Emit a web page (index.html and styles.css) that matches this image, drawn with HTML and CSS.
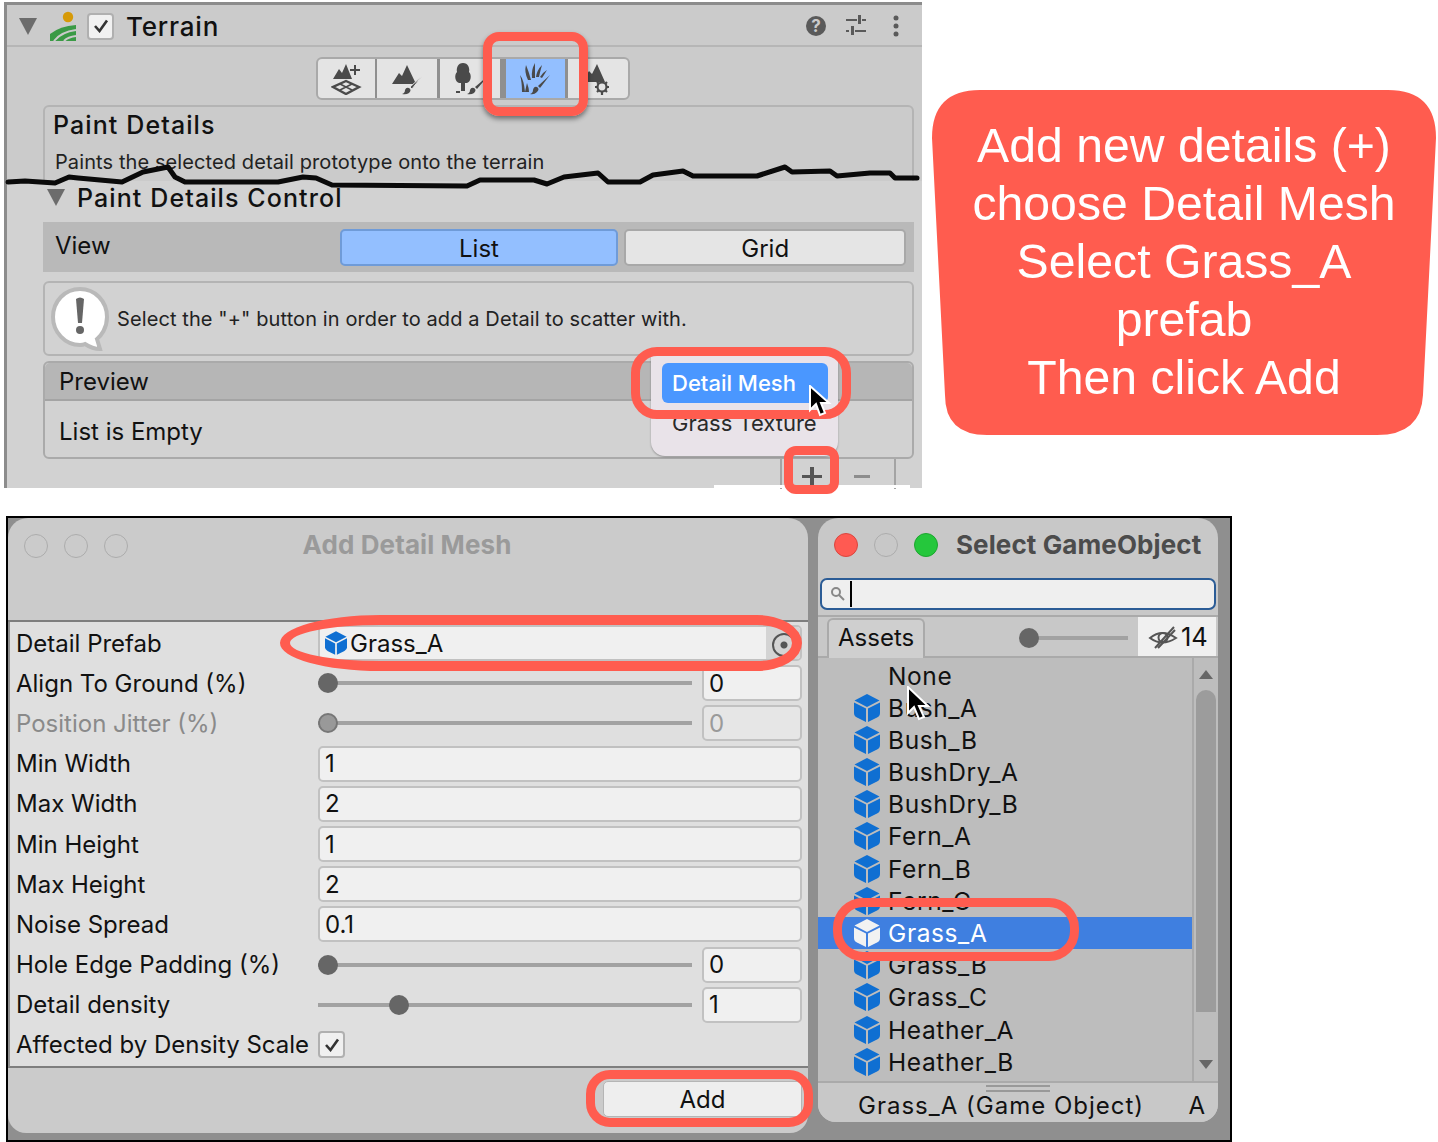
FILE: index.html
```html
<!DOCTYPE html>
<html lang="en">
<head>
  <meta charset="UTF-8" />
  <title>Terrain details</title>
  <link rel="stylesheet" href="styles.css">
</head>
<body>
<svg width="0" height="0" class="defs">
  <symbol id="cube" viewBox="0 0 26 28">
    <path d="M13 0 25.5 6.5 13 13 .5 6.5Z"/>
    <path d="M0 8.5 12 14.5V28L3 23.5Q0 22 0 19Z"/>
    <path d="M26 8.5 14 14.5V28L23 23.5Q26 22 26 19Z"/>
  </symbol>
</svg>

<section class="panel">
  <header class="comp-head">
    <span class="foldout"></span>
    <svg class="terrain-ico" width="26" height="34" viewBox="0 0 26 34">
      <circle cx="18" cy="10" r="5.2" fill="#d69a08"/>
      <path d="M0 34V27Q10 19 26 18V34Z" fill="#3a9a45"/>
      <path d="M4 34Q11 25 26 23M14 34Q18 30 26 29" fill="none" stroke="#cbcbcb" stroke-width="2"/>
    </svg>
    <span class="check"><svg width="16" height="14" viewBox="0 0 16 14"><path d="M2 7 6.5 12 14 1.5" fill="none" stroke="#333" stroke-width="2.6"/></svg></span>
    <b class="comp-title">Terrain</b>
    <span class="head-tools">
      <svg width="22" height="22" viewBox="0 0 22 22"><circle cx="11" cy="11" r="10" fill="#5a5a5a"/><text x="11" y="16.500" text-anchor="middle" class="q">?</text></svg>
      <svg class="sliders" width="22" height="22" viewBox="0 0 22 22" fill="#5a5a5a"><path d="M1 4H12V6H1ZM17 4H21V6H17ZM1 15H4V17H1ZM10 15H21V17H10Z"/><path d="M13 0H16V9H13ZM6 11H9V20H6Z"/></svg>
      <svg class="dots" width="8" height="22" viewBox="0 0 8 22" fill="#5a5a5a"><circle cx="4" cy="3" r="2.5"/><circle cx="4" cy="11" r="2.5"/><circle cx="4" cy="19" r="2.5"/></svg>
    </span>
  </header>

  <div class="toolbar">
    <span class="tool">
      <svg width="32" height="32" viewBox="0 0 32 32" fill="#4a4a4a"><path d="M2 16 8 6 11 10 15 1 21 16Z"/><path d="M23 2H25V6H29V8H25V12H23V8H19V6H23Z"/><path d="M15 18 28 24 15 31 2 24Z" fill="none" stroke="#4a4a4a" stroke-width="2.4"/><path d="M9 21 21 27M21 21 9 27" stroke="#4a4a4a" stroke-width="1.600"/></svg>
    </span>
    <span class="tool">
      <svg width="32" height="32" viewBox="0 0 32 32" fill="#4a4a4a"><path d="M1 21 8 10 11 13 16 2 25 21Z"/><path d="M31 13 21 26 19 24Z" stroke="#e4e4e4"/><path d="M18 25Q21 27 18 30 15 32 11 31 14 30 14 27 15 24 18 25Z"/></svg>
    </span>
    <span class="tool">
      <svg width="36" height="34" viewBox="0 0 36 34" fill="#4a4a4a"><path d="M11 1C16 1 18 6 17 10 20 13 19 20 15 21H7C3 20 2 13 5 10 4 6 6 1 11 1Z"/><path d="M9 21H13V29H9ZM4 29H8V31H4Z"/><path d="M36 14 25 27 23 25Z"/><path d="M22 26Q25 28 22 31 19 33 15 32 18 31 18 28 19 25 22 26Z"/></svg>
    </span>
    <span class="tool on">
      <svg width="32" height="32" viewBox="0 0 32 32" fill="#4a4a4a"><path d="M9 17Q5 9 7 2 10 9 12 17Z"/><path d="M13 15Q12 7 16 0 16 8 16 15Z"/><path d="M17 14Q18 7 23 2 21 9 20 14Z"/><path d="M21 14Q23 10 28 7 25 12 23 15Z"/><path d="M1 12Q5 17 6 29H3Q3 19 1 12Z"/><path d="M8 20Q10 25 10 29H6Q7 24 8 20Z"/><path d="M31 12 21 25 19 23Z"/><path d="M18 24Q21 26 18 29 15 32 11 31 14 30 14 27 15 23 18 24Z"/></svg>
    </span>
    <span class="tool">
      <svg width="32" height="32" viewBox="0 0 32 32" fill="#4a4a4a"><path d="M0 19 7 8 10 11 15 1 23 19Z"/><circle cx="20" cy="24" r="4.500" fill="#e4e4e4" stroke="#4a4a4a" stroke-width="2.200"/><path d="M20 16V19M20 29V32M13 24H16M24 24H27M15 19 17 21M25 19 23 21M15 29 17 27M25 29 23 27" stroke="#4a4a4a" stroke-width="2.200"/></svg>
    </span>
  </div>

  <div class="info-box">
    <b class="info-title">Paint Details</b>
    <p class="info-text">Paints the selected detail prototype onto the terrain</p>
  </div>

  <div class="lower">
    <div class="control-head"><span class="foldout dark"></span><b>Paint Details Control</b></div>

    <div class="view-row">
      <span class="view-label">View</span>
      <span class="seg on">List</span>
      <span class="seg">Grid</span>
    </div>

    <div class="help-box">
      <svg width="60" height="66" viewBox="0 0 60 66">
        <path d="M30 3C45 3 57 15 57 31 57 42 51 50 47 53L50 63C44 63 38 60 35 58 33 59 31 59 30 59 15 59 3 46 3 31 3 15 15 3 30 3Z" fill="#fff" stroke="#b9b9b9" stroke-width="4"/>
        <path d="M26 13Q30 10 34 13L32 37H28Z" fill="#666"/><circle cx="30" cy="44" r="4" fill="#666"/>
      </svg>
      <span>Select the "+" button in order to add a Detail to scatter with.</span>
    </div>

    <div class="preview">
      <div class="preview-head">Preview</div>
      <div class="preview-body">List is Empty</div>
    </div>

    <div class="plus-tabs">
      <span class="tab plus"></span>
      <span class="tab minus"></span>
      <span class="tab end"></span>
    </div>
    <i class="cut"></i>
  </div>

  <div class="popup">
    <div class="popup-item on">Detail Mesh</div>
    <div class="popup-item">Grass Texture</div>
  </div>
</section>

<svg class="wobble" width="922" height="30" viewBox="0 160 922 30">
  <path d="M8 182 25 181 55 183 69 177 78 178 122 182 143 172 168 167 175 177 185 182 278 182 303 177 316 178 332 185 467 186 480 180 534 180 547 184 564 177 598 173 608 182 627 182 640 182 653 175 683 171 693 176 757 176 785 167 792 172 830 171 837 176 870 173 890 173 895 178 917 178" fill="none" stroke="#0a0a0a" stroke-width="5" stroke-linejoin="round" stroke-linecap="round"/>
</svg>

<span class="mark mark-tool"></span>
<span class="mark mark-mesh"></span>
<span class="mark mark-plus"></span>

<aside class="callout">
  <svg class="callout-bg" width="504" height="345" viewBox="0 0 504 345"><path d="M48 0H456Q504 0 504 48L491 305Q489 345 445 345H55Q13 345 13 305L0 48Q0 0 48 0Z" fill="#ff5c4f"/></svg>
  <p class="callout-text">Add new details (+)<br>choose Detail Mesh<br>Select Grass_A<br>prefab<br>Then click Add</p>
</aside>

<svg class="cursor cursor-a" width="26" height="32" viewBox="0 0 26 32"><path d="M2 1V25L8 19 12 30 17 28 13 18H21Z" fill="#000" stroke="#fff" stroke-width="2"/></svg>

<section class="desk">
  <div class="win add-win">
    <div class="title-bar">
      <span class="light"></span><span class="light"></span><span class="light"></span>
      <b class="add-title">Add Detail Mesh</b>
    </div>
    <div class="form">
      <div class="row"><label>Detail Prefab</label>
        <div class="field obj"><svg class="cube small" width="22" height="24"><use href="#cube"/></svg><span>Grass_A</span><i class="picker"></i></div></div>
      <div class="row"><label>Align To Ground (%)</label>
        <div class="slider"><i class="track"><i class="knob"></i></i><span class="field num">0</span></div></div>
      <div class="row off"><label>Position Jitter (%)</label>
        <div class="slider"><i class="track"><i class="knob"></i></i><span class="field num">0</span></div></div>
      <div class="row"><label>Min Width</label><span class="field">1</span></div>
      <div class="row"><label>Max Width</label><span class="field">2</span></div>
      <div class="row"><label>Min Height</label><span class="field">1</span></div>
      <div class="row"><label>Max Height</label><span class="field">2</span></div>
      <div class="row"><label>Noise Spread</label><span class="field">0.1</span></div>
      <div class="row"><label>Hole Edge Padding (%)</label>
        <div class="slider"><i class="track"><i class="knob"></i></i><span class="field num">0</span></div></div>
      <div class="row"><label>Detail density</label>
        <div class="slider"><i class="track mid"><i class="knob"></i></i><span class="field num">1</span></div></div>
      <div class="row"><label>Affected by Density Scale</label>
        <span class="check box"><svg width="16" height="14" viewBox="0 0 16 14"><path d="M2 7 6.5 12 14 1.5" fill="none" stroke="#333" stroke-width="2.6"/></svg></span></div>
    </div>
    <div class="win-foot"><span class="add-btn">Add</span></div>
  </div>

  <div class="win pick-win">
    <div class="pick-title">
      <span class="light red"></span><span class="light"></span><span class="light green"></span>
      <b>Select GameObject</b>
    </div>
    <div class="search">
      <svg width="16" height="16" viewBox="0 0 16 16" fill="none" stroke="#888" stroke-width="2"><circle cx="6" cy="6" r="4"/><path d="M9 9 14 14"/></svg>
      <i class="caret"></i>
    </div>
    <div class="tabs">
      <span class="assets">Assets</span>
      <i class="track zoom"><i class="knob"></i></i>
      <span class="hidden-count">
        <svg width="30" height="24" viewBox="0 0 30 24" fill="none" stroke="#555" stroke-width="2"><path d="M2 13Q14 3 28 13 14 22 2 13Z"/><circle cx="15" cy="12.500" r="4.500"/><path d="M7 23 26 2M10 23 27 5"/></svg>14
      </span>
    </div>
    <div class="list-wrap">
      <ul class="list">
        <li class="none">None</li>
        <li><svg class="cube" width="26" height="28"><use href="#cube"/></svg>Bush_A</li>
        <li><svg class="cube" width="26" height="28"><use href="#cube"/></svg>Bush_B</li>
        <li><svg class="cube" width="26" height="28"><use href="#cube"/></svg>BushDry_A</li>
        <li><svg class="cube" width="26" height="28"><use href="#cube"/></svg>BushDry_B</li>
        <li><svg class="cube" width="26" height="28"><use href="#cube"/></svg>Fern_A</li>
        <li><svg class="cube" width="26" height="28"><use href="#cube"/></svg>Fern_B</li>
        <li><svg class="cube" width="26" height="28"><use href="#cube"/></svg>Fern_C</li>
        <li class="sel"><svg class="cube" width="26" height="28"><use href="#cube"/></svg>Grass_A</li>
        <li><svg class="cube" width="26" height="28"><use href="#cube"/></svg>Grass_B</li>
        <li><svg class="cube" width="26" height="28"><use href="#cube"/></svg>Grass_C</li>
        <li class="nudge"><svg class="cube" width="26" height="28"><use href="#cube"/></svg>Heather_A</li>
        <li class="nudge"><svg class="cube" width="26" height="28"><use href="#cube"/></svg>Heather_B</li>
      </ul>
      <div class="scroll">
        <i class="arrow up"></i>
        <i class="thumb"></i>
        <i class="arrow down"></i>
      </div>
    </div>
    <div class="pick-foot"><i class="grip"></i><span>Grass_A (Game Object)</span><span class="bundle">A</span></div>
  </div>
</section>

<span class="mark mark-prefab"></span>
<span class="mark mark-grass"></span>
<span class="mark mark-add"></span>
<svg class="cursor cursor-b" width="26" height="36" viewBox="0 0 26 36"><path d="M2 1V27L8 21 13 33 18 31 13 20H22Z" fill="#000" stroke="#fff" stroke-width="2"/></svg>
</body>
</html>
```

FILE: styles.css
```css
* {
  box-sizing: border-box;
}
html, body {
  margin: 0;
  background: #fff;
}
body {
  position: relative;
  width: 1438px;
  height: 1142px;
  overflow: hidden;
  font-family: Inter, "Liberation Sans", sans-serif;
  font-size: 24px;
  color: #111;
}
.defs {
  position: absolute;
}
i {
  display: block;
}

/* top panel */
.panel {
  position: absolute;
  left: 4px;
  top: 2px;
  width: 918px;
  height: 486px;
  background: #cbcbcb;
  border-top: 3px solid #8c8c8c;
  border-left: 3px solid #8c8c8c;
}
.comp-head {
  display: flex;
  align-items: center;
  height: 42px;
  padding: 2px 22px 0 12px;
  border-bottom: 2px solid #b6b6b6;
}
.foldout {
  flex: none;
  width: 0;
  height: 0;
  border-left: 9px solid transparent;
  border-right: 9px solid transparent;
  border-top: 17px solid #6c6c6c;
}
.terrain-ico {
  margin: 0 0 4px 13px;
}
.check {
  display: flex;
  align-items: center;
  justify-content: center;
  width: 27px;
  height: 27px;
  margin-left: 11px;
  background: #f1f1f1;
  border: 2px solid #b0b0b0;
  border-radius: 4px;
}
.comp-title {
  margin-left: 12px;
  font-size: 26px;
  font-weight: 500;
  letter-spacing: .8px;
}
.head-tools {
  display: flex;
  align-items: center;
  margin-left: auto;
}
.sliders {
  margin-left: 18px;
}
.dots {
  margin-left: 25px;
}
.q {
  font-size: 17px;
  font-weight: 700;
  fill: #cbcbcb;
}
.toolbar {
  display: flex;
  width: 314px;
  height: 43px;
  margin: 10px 0 0 309px;
  background: #e4e4e4;
  border: 2px solid #a9a9a9;
  border-radius: 6px;
}
.tool {
  display: flex;
  align-items: center;
  justify-content: center;
  flex: 1;
  border-right: 3px solid #8f8f8f;
}
.tool:first-child {
  flex: none;
  width: 59px;
  border-right-width: 2px;
}
.tool:last-child {
  border-right: 0;
}
.tool.on {
  background: #93bfff;
  border-left: 3px solid #8f8f8f;
}
.info-box {
  height: 90px;
  margin: 5px 1px 0 36px;
  width: 871px;
  padding: 3px 8px;
  border: 2px solid #b4b4b4;
  border-radius: 6px 6px 0 0;
}
.info-title {
  display: block;
  font-size: 25px;
  font-weight: 500;
  letter-spacing: 1.1px;
}
.info-text {
  margin: 10px 0 0 2px;
  font-size: 20px;
  letter-spacing: .1px;
  color: #222;
}
.lower {
  position: absolute;
  left: 0;
  top: 176px;
  width: 915px;
  height: 307px;
  background: #d2d2d2;
  padding: 0 0 0 36px;
}
.control-head {
  display: flex;
  align-items: center;
  gap: 12px;
  height: 35px;
  padding: 0 0 2px 4px;
  font-size: 25px;
  letter-spacing: 1.1px;
}
.control-head b {
  font-weight: 500;
}
.view-row {
  display: flex;
  align-items: center;
  width: 871px;
  height: 50px;
  margin-top: 6px;
  padding: 0 8px 0 12px;
  background: #b9b9b9;
}
.view-label {
  width: 285px;
  margin-top: -3px;
}
.seg {
  height: 37px;
  line-height: 35px;
  text-align: center;
  border: 2px solid #a8a8a8;
  border-radius: 5px;
  background: #e5e5e5;
  width: 282px;
  margin-left: 6px;
}
.seg.on {
  width: 279px;
  margin-left: 0;
  background: #93bfff;
  border-color: #6f9bd8;
}
.help-box {
  display: flex;
  align-items: center;
  gap: 7px;
  width: 871px;
  height: 75px;
  margin-top: 9px;
  padding-left: 5px;
  border: 2px solid #b4b4b4;
  border-radius: 6px;
  font-size: 20px;
  letter-spacing: .1px;
  color: #222;
}
.preview {
  width: 871px;
  height: 98px;
  margin-top: 5px;
  border: 2px solid #aaa;
  border-radius: 6px;
}
.preview-head {
  height: 38px;
  line-height: 37px;
  padding-left: 14px;
  background: #b6b6b6;
  border-bottom: 2px solid #a4a4a4;
  border-radius: 5px 5px 0 0;
}
.preview-body {
  height: 58px;
  line-height: 61px;
  padding-left: 14px;
}
.plus-tabs {
  display: flex;
  margin-left: 737px;
}
.tab {
  position: relative;
  height: 30px;
  border-left: 2px solid #a4a4a4;
}
.tab.plus {
  width: 58px;
}
.tab.minus {
  width: 56px;
  border-left: 0;
}
.tab.end {
  width: 20px;
}
.tab.plus::before,
.tab.plus::after,
.tab.minus::before {
  content: "";
  position: absolute;
  background: #555;
}
.tab.plus::before {
  left: 20px;
  top: 16px;
  width: 20px;
  height: 3px;
}
.tab.plus::after {
  left: 28px;
  top: 8px;
  width: 4px;
  height: 19px;
}
.tab.minus::before {
  left: 16px;
  top: 16px;
  width: 16px;
  height: 3px;
  background: #8d8d8d;
}
.cut {
  position: absolute;
  left: 707px;
  bottom: 0;
  width: 196px;
  height: 3px;
  background: #fff;
}
.popup {
  position: absolute;
  left: 644px;
  top: 347px;
  width: 187px;
  height: 104px;
  padding: 11px 10px 0 11px;
  background: #e9e3e9;
  border-radius: 0 0 14px 14px;
  box-shadow: 0 1px 2px rgba(0, 0, 0, .3);
}
.popup-item {
  height: 40px;
  line-height: 40px;
  padding-left: 10px;
  font-size: 22px;
  color: #2a2a2a;
}
.popup-item.on {
  width: 166px;
  background: #4a97ff;
  border-radius: 6px;
  color: #fff;
  font-weight: 500;
}
.wobble {
  position: absolute;
  left: 0;
  top: 160px;
}

/* red annotations */
.mark {
  position: absolute;
  border: 9px solid #ff5c4f;
  background: transparent;
}
.mark-tool {
  left: 483px;
  top: 32px;
  width: 105px;
  height: 84px;
  border-radius: 16px;
  box-shadow: 0 3px 5px rgba(0, 0, 0, .45);
}
.mark-mesh {
  left: 631px;
  top: 347px;
  width: 220px;
  height: 72px;
  border-radius: 26px;
}
.mark-plus {
  left: 784px;
  top: 446px;
  width: 55px;
  height: 48px;
  border-radius: 12px;
}
.mark-prefab {
  left: 280px;
  top: 615px;
  width: 522px;
  height: 56px;
  border-width: 10px;
  border-radius: 100px 45px 45px 100px / 28px;
}
.mark-grass {
  left: 833px;
  top: 898px;
  width: 246px;
  height: 63px;
  border-radius: 30px;
}
.mark-add {
  left: 586px;
  top: 1070px;
  width: 227px;
  height: 57px;
  border-radius: 24px;
}
.callout {
  position: absolute;
  left: 932px;
  top: 90px;
  width: 504px;
  height: 345px;
}
.callout-bg {
  position: absolute;
  left: 0;
  top: 0;
}
.callout-text {
  position: relative;
  margin: 0;
  padding-top: 26px;
  text-align: center;
  font-family: "Liberation Sans", Arial, sans-serif;
  font-size: 48.2px;
  line-height: 58px;
  color: #fff;
}
.cursor {
  position: absolute;
}
.cursor-a {
  left: 808px;
  top: 385px;
}
.cursor-b {
  left: 906px;
  top: 686px;
}

/* bottom screenshot */
.desk {
  position: absolute;
  left: 6px;
  top: 516px;
  width: 1226px;
  height: 626px;
  background: #8f8f8f;
  border: 2px solid #000;
}
.win {
  position: absolute;
  top: 0;
  overflow: hidden;
}
.add-win {
  left: 0;
  width: 800px;
  height: 615px;
  background: #cbcbcb;
  border-radius: 20px 20px 18px 18px;
}
.title-bar {
  position: relative;
  display: flex;
  align-items: center;
  gap: 16px;
  height: 104px;
  padding: 0 0 47px 16px;
  border-bottom: 2px solid #7e7e7e;
}
.light {
  width: 24px;
  height: 24px;
  border: 1px solid #acacac;
  border-radius: 50%;
}
.light.red {
  background: #ff5a52;
  border-color: #d9463f;
}
.light.green {
  background: #25c73c;
  border-color: #1da52f;
}
.add-title {
  position: absolute;
  left: 0;
  right: 0;
  top: 11px;
  padding-right: 2px;
  text-align: center;
  font-size: 26px;
  letter-spacing: .1px;
  color: #9a9a9a;
  font-weight: 700;
}
.form {
  height: 446px;
  padding-top: 1px;
  background: #dfdfdf;
  border-left: 2px solid #8e8e8e;
  border-bottom: 2px solid #7e7e7e;
}
.row {
  display: flex;
  align-items: center;
  height: 40.2px;
  padding: 0 6px 0 6px;
}
.row label {
  flex: none;
  width: 302px;
  white-space: nowrap;
}
.row.off {
  color: #8a8a8a;
}
.field {
  display: flex;
  align-items: center;
  flex: 1;
  height: 36px;
  padding-left: 5px;
  background: #f0f0f0;
  border: 2px solid #c1c1c1;
  border-radius: 5px;
  overflow: hidden;
}
.off .field {
  color: #9a9a9a;
  background: #e6e6e6;
}
.field.obj {
  gap: 3px;
}
.cube {
  flex: none;
  fill: #0f6fd2;
}
.picker {
  position: relative;
  align-self: stretch;
  width: 34px;
  margin-left: auto;
  background: #d4d4d4;
}
.picker::before {
  content: "";
  position: absolute;
  left: 6px;
  top: 6px;
  width: 20px;
  height: 20px;
  border: 2px solid #555;
  border-radius: 50%;
  background: radial-gradient(circle, #555 0 3px, #d4d4d4 4px);
}
.slider {
  display: flex;
  align-items: center;
  flex: 1;
}
.track {
  position: relative;
  width: 374px;
  height: 4px;
  margin-right: 10px;
  background: #a2a2a2;
}
.knob {
  position: absolute;
  left: 0;
  top: -8px;
  width: 20px;
  height: 20px;
  background: #666;
  border-radius: 50%;
}
.off .knob {
  background: #999;
  border: 2px solid #777;
}
.track.mid .knob {
  left: 71px;
}
.check.box {
  margin-left: 0;
  background: #f0f0f0;
}
.win-foot {
  display: flex;
  justify-content: flex-end;
  padding: 13px 6px 0 0;
}
.add-btn {
  width: 199px;
  height: 36px;
  line-height: 36px;
  text-align: center;
  background: #eee;
  border: 1px solid #b5b5b5;
  border-radius: 5px;
}
.pick-win {
  left: 810px;
  width: 400px;
  height: 604px;
  background: #c8c8c8;
  border-radius: 20px 20px 18px 18px;
}
.pick-title {
  display: flex;
  align-items: center;
  gap: 16px;
  height: 54px;
  padding-left: 16px;
}
.pick-title b {
  margin: -2px 0 0 2px;
  font-size: 26px;
  letter-spacing: .1px;
  color: #4c4c4c;
  white-space: nowrap;
}
.search {
  display: flex;
  align-items: center;
  gap: 4px;
  height: 32px;
  margin: 6px 2px 0 2px;
  padding-left: 8px;
  background: #efefef;
  border: 2px solid #2b5c96;
  border-radius: 7px;
}
.caret {
  width: 2px;
  height: 26px;
  background: #000;
}
.tabs {
  position: relative;
  display: flex;
  align-items: flex-end;
  height: 43px;
  margin-top: 5px;
  border-top: 2px solid #aaa;
  border-bottom: 2px solid #aaa;
}
.assets {
  height: 40px;
  line-height: 36px;
  margin: 0 0 -2px 9px;
  padding: 0 9px;
  background: #cfcfcf;
  border: 2px solid #aaa;
  border-bottom: 0;
  border-radius: 6px 6px 0 0;
}
.track.zoom {
  width: 108px;
  margin: 0 0 16px auto;
}
.track.zoom .knob {
  left: -1px;
}
.hidden-count {
  display: flex;
  align-items: center;
  gap: 3px;
  width: 78px;
  height: 39px;
  margin: 0 2px 0 10px;
  padding-left: 10px;
  background: #f0f0f0;
  font-size: 25.5px;
}
.list-wrap {
  display: flex;
  height: 423px;
  background: #bdbdbd;
}
.list {
  flex: 1;
  margin: 0;
  padding: 1.5px 0 0;
  list-style: none;
}
.list li {
  display: flex;
  align-items: center;
  gap: 8px;
  height: 32.17px;
  padding-left: 36px;
  font-size: 24.5px;
  letter-spacing: .6px;
}
.list li.none {
  padding-left: 70px;
}
.list li.sel {
  background: #3f7fe0;
  color: #fff;
}
.list li.nudge {
  position: relative;
  top: 1px;
}
.sel .cube {
  fill: #f2f2f2;
}
.scroll {
  position: relative;
  width: 26px;
  border-left: 2px solid #aaa;
}
.arrow {
  position: absolute;
  left: 5px;
  width: 0;
  height: 0;
  border-left: 7px solid transparent;
  border-right: 7px solid transparent;
}
.arrow.up {
  top: 12px;
  border-bottom: 9px solid #666;
}
.arrow.down {
  bottom: 12px;
  border-top: 9px solid #666;
}
.thumb {
  position: absolute;
  left: 2px;
  top: 32px;
  width: 20px;
  height: 322px;
  background: #9c9c9c;
  border-radius: 10px 10px 0 0;
}
.pick-foot {
  position: relative;
  display: flex;
  align-items: center;
  justify-content: space-between;
  height: 41px;
  padding: 5px 12px 0 40px;
  background: #c8c8c8;
  border-top: 2px solid #aaa;
  letter-spacing: 1px;
}
.grip {
  position: absolute;
  left: 168px;
  top: 2px;
  width: 64px;
  height: 7px;
  border-top: 2px solid #999;
  border-bottom: 2px solid #999;
}
```
